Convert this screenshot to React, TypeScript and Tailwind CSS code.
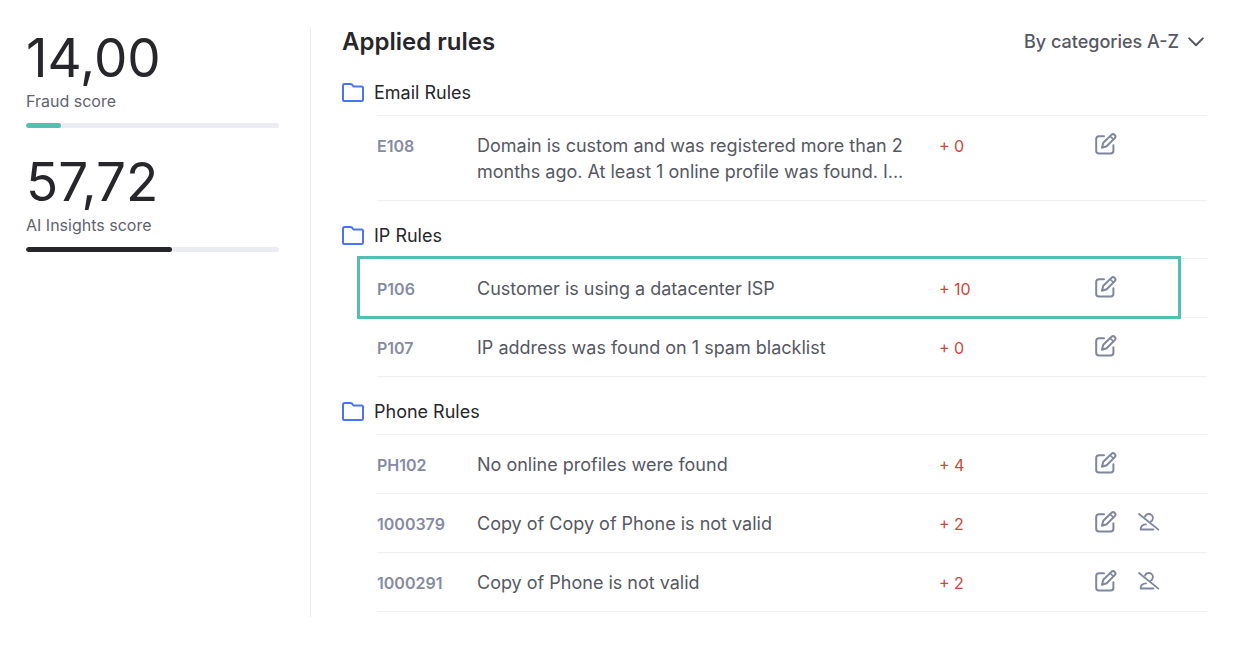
import React, { useState } from "react";

type Rule = {
  code: string;
  text: string;
  score: number;
  highlighted?: boolean;
  custom?: boolean;
};

const scores = [
  { label: "Fraud score", value: "14,00", percent: 14, bar: "bg-[#53bfb3]" },
  { label: "AI Insights score", value: "57,72", percent: 57.72, bar: "bg-[#27272b]" },
];

const categories: { name: string; rules: Rule[] }[] = [
  {
    name: "Email Rules",
    rules: [
      {
        code: "E108",
        text: "Domain is custom and was registered more than 2 months ago. At least 1 online profile was found. I...",
        score: 0,
      },
    ],
  },
  {
    name: "IP Rules",
    rules: [
      { code: "P106", text: "Customer is using a datacenter ISP", score: 10, highlighted: true },
      { code: "P107", text: "IP address was found on 1 spam blacklist", score: 0 },
    ],
  },
  {
    name: "Phone Rules",
    rules: [
      { code: "PH102", text: "No online profiles were found", score: 4 },
      { code: "1000379", text: "Copy of Copy of Phone is not valid", score: 2, custom: true },
      { code: "1000291", text: "Copy of Phone is not valid", score: 2, custom: true },
    ],
  },
];

function FolderIcon() {
  return (
    <svg width="22" height="20" viewBox="0 0 22 20" fill="none" stroke="#4a74f5" strokeWidth="2" strokeLinejoin="round">
      <path d="M1 2.4C1 1.5 1.6 1 2.5 1H8.6C9.2 1 9.6 1.2 10 1.7L11.4 3.4H19.5C20.4 3.4 21 4 21 4.9V16.7C21 17.6 20.4 18.1 19.5 18.1H2.5C1.6 18.1 1 17.6 1 16.7Z" />
    </svg>
  );
}

function EditIcon() {
  return (
    <svg width="22" height="22" viewBox="0 0 22 22" fill="none" stroke="#7f869d" strokeWidth="2" strokeLinecap="round" strokeLinejoin="round">
      <path d="M9 3.2H4C2.2 3.2 1.2 4.2 1.2 6V17.8C1.2 19.6 2.2 20.6 4 20.6H15.6C17.4 20.6 18.4 19.6 18.4 17.8V12.2" />
      <path d="M6.9 14.8L8.3 9.8L16.4 1.9C17.3 1 18.8 1 19.7 1.9C20.6 2.8 20.6 4.2 19.7 5.1L11.7 13.2Z" />
      <path d="M15.2 3.2L18.4 6.4" strokeWidth="1.6" />
    </svg>
  );
}

function UserOffIcon() {
  return (
    <svg width="22" height="18" viewBox="0 0 22 18" fill="none" stroke="#7f869d" strokeWidth="1.8" strokeLinecap="round" strokeLinejoin="round">
      <path d="M1 1L20.4 16.6" />
      <path d="M7 3.6C7.6 2 9 1 10.8 1C13 1 14.9 2.8 14.9 5C14.9 6.6 14 8 12.6 8.7" />
      <path d="M8 11.4C4.8 11.6 2.6 13.6 2.6 16.5H15.4" />
    </svg>
  );
}

function ScoreCard({ label, value, percent, bar }: (typeof scores)[number]) {
  return (
    <div>
      <p className="text-[53px] leading-[62px] text-[#27272b]">{value}</p>
      <p className="text-base leading-6 text-[#5f6270]">{label}</p>
      <div className="mt-2.5 h-[5px] overflow-hidden rounded-full bg-[#ecedf2]">
        <div className={`h-full rounded-full ${bar}`} style={{ width: `${percent}%` }} />
      </div>
    </div>
  );
}

function RuleRow({ rule }: { rule: Rule }) {
  const cell = "border-b border-[#f0f0f3] pt-[17px] pb-[15px] align-top leading-[26px]";

  return (
    <tr className="relative">
      <td className={`${cell} w-[100px] text-base font-semibold text-[#858ba2]`}>
        {rule.code}
        {rule.highlighted ? (
          <span className="pointer-events-none absolute -top-[3px] right-[26px] -bottom-px -left-5 border-[3px] border-[#53bfb3]" />
        ) : null}
      </td>
      <td className={`${cell} pr-5 text-lg text-[#555863]`}>{rule.text}</td>
      <td className={`${cell} w-[156px] text-base text-[#d0453b]`}>+ {rule.score}</td>
      <td className={`${cell} w-[112px]`}>
        <div className="flex items-center gap-[21px]">
          <button aria-label={`Edit ${rule.code}`} className="cursor-pointer">
            <EditIcon />
          </button>
          {rule.custom ? (
            <button aria-label={`Exclude user from ${rule.code}`} className="cursor-pointer">
              <UserOffIcon />
            </button>
          ) : null}
        </div>
      </td>
    </tr>
  );
}

function App() {
  const [sort, setSort] = useState("az");

  return (
    <div className="flex bg-white py-[27px] pr-[39px] pl-[26px] font-['Inter',sans-serif]">
      <aside className="w-[285px] shrink-0 border-r border-[#ececf0] pr-[31px]">
        <div className="flex flex-col gap-[23px]">
          {scores.map((score) => (
            <ScoreCard key={score.label} {...score} />
          ))}
        </div>
      </aside>
      <main className="min-w-0 flex-1 pb-[5px] pl-[31px]">
        <div className="mb-px flex h-[30px] items-center justify-between">
          <h1 className="text-2xl font-semibold text-[#27272b]">Applied rules</h1>
          <div className="relative flex items-center text-[#555863]">
            <select
              aria-label="Sort rules"
              value={sort}
              onChange={(e) => setSort(e.target.value)}
              className="h-[30px] cursor-pointer appearance-none bg-transparent pr-[27px] text-lg leading-[30px] font-medium"
            >
              <option value="az">By categories A-Z</option>
            </select>
            <svg className="pointer-events-none absolute right-[3px]" width="16" height="10" viewBox="0 0 16 10" fill="none" stroke="currentColor" strokeWidth="2" strokeLinecap="round" strokeLinejoin="round">
              <path d="M1.2 1.4L8 8.2L14.8 1.4" />
            </svg>
          </div>
        </div>
        {categories.map((category) => (
          <section key={category.name}>
            <h2 className="flex items-center gap-2.5 pt-[22px] pb-[9px] text-lg leading-[26px] text-[#27272b]">
              <FolderIcon />
              {category.name}
            </h2>
            <div className="ml-[35px] border-t border-[#f0f0f3]">
              <table className="w-full table-fixed border-separate border-spacing-0 text-left">
                <tbody>
                  {category.rules.map((rule) => (
                    <RuleRow key={rule.code} rule={rule} />
                  ))}
                </tbody>
              </table>
            </div>
          </section>
        ))}
      </main>
    </div>
  );
}

export default App;
